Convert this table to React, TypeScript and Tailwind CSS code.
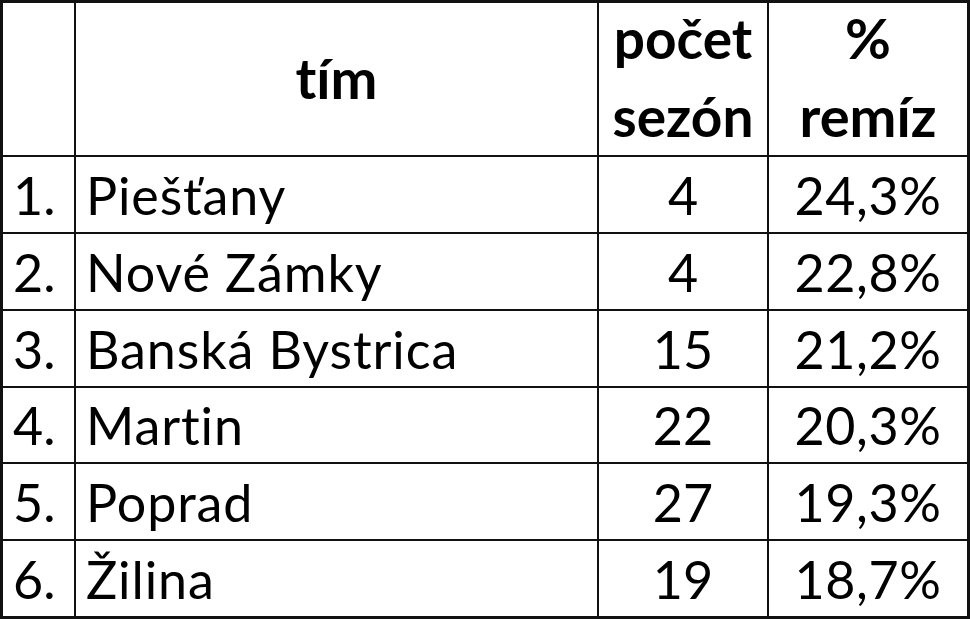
const rows = [
  { n: "1.", team: "Piešťany", seasons: "4", pct: "24,3%" },
  { n: "2.", team: "Nové Zámky", seasons: "4", pct: "22,8%" },
  { n: "3.", team: "Banská Bystrica", seasons: "15", pct: "21,2%" },
  { n: "4.", team: "Martin", seasons: "22", pct: "20,3%" },
  { n: "5.", team: "Poprad", seasons: "27", pct: "19,3%" },
  { n: "6.", team: "Žilina", seasons: "19", pct: "18,7%" },
];

export default function App() {
  return (
    <div
      className="w-[970px] h-[619px] bg-white text-black text-[52px] [font-variant-ligatures:none]"
      style={{ fontFamily: "Lato, 'Liberation Sans', sans-serif" }}
    >
      <div className="grid h-full grid-cols-[71px_521px_168px_198px] grid-rows-[152px_75px_75px_75px_74px_75px_75px] gap-[2px] bg-[#111] p-[3px]">
        <div className="bg-white" />
        <div className="flex items-center justify-center bg-white text-[56px] font-bold pb-[2px]">tím</div>
        <div className="flex flex-col items-center justify-center bg-white text-[55px] font-bold leading-[78px] pb-[4px]">
          <span>počet</span>
          <span>sezón</span>
        </div>
        <div className="flex flex-col items-center justify-center bg-white text-[56px] font-bold leading-[78px] pb-[4px]">
          <span>%</span>
          <span>remíz</span>
        </div>
        {rows.map((r) => (
          <Row key={r.n} {...r} />
        ))}
      </div>
    </div>
  );
}

function Row({ n, team, seasons, pct }: { n: string; team: string; seasons: string; pct: string }) {
  return (
    <>
      <div className="flex items-center bg-white pl-[10px] leading-none">{n}</div>
      <div className="flex items-center bg-white pl-[10px] leading-none tracking-[0.9px]">{team}</div>
      <div className="flex items-center justify-center bg-white leading-none">{seasons}</div>
      <div className="flex items-center justify-center bg-white leading-none tracking-[0.6px]">{pct}</div>
    </>
  );
}
